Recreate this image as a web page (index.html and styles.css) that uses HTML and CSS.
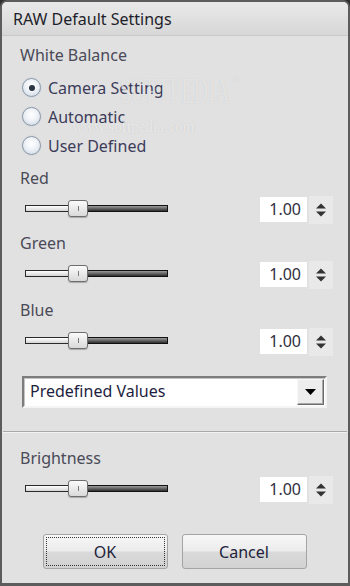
FILE: index.html
```html
<!DOCTYPE html>
<html>
<head>
<meta charset="utf-8">
<link rel="stylesheet" href="styles.css">
</head>
<body>
<div class="window">
  <div class="titlebar">RAW Default Settings</div>
  <div class="content">
    <div class="label">White Balance</div>
    <div class="radios">
      <div class="radio-row"><span class="radio checked"></span><span class="radio-text">Camera Setting</span></div>
      <div class="radio-row"><span class="radio"></span><span class="radio-text">Automatic</span></div>
      <div class="radio-row"><span class="radio"></span><span class="radio-text">User Defined</span></div>
    </div>

    <div class="param top">
      <div class="label">Red</div>
      <div class="slider-row">
        <div class="slider"><div class="track-left"></div><div class="thumb"></div><div class="track-right"></div></div>
        <div class="spin"><div class="spin-value">1.00</div><div class="spin-arrows"><svg width="12" height="14" viewBox="0 0 12 14"><path d="M6 0.5 L11 5.5 H1 Z" fill="#333"/><path d="M1 8.5 H11 L6 13.5 Z" fill="#333"/></svg></div></div>
      </div>
    </div>
    <div class="param">
      <div class="label">Green</div>
      <div class="slider-row">
        <div class="slider"><div class="track-left"></div><div class="thumb"></div><div class="track-right"></div></div>
        <div class="spin"><div class="spin-value">1.00</div><div class="spin-arrows"><svg width="12" height="14" viewBox="0 0 12 14"><path d="M6 0.5 L11 5.5 H1 Z" fill="#333"/><path d="M1 8.5 H11 L6 13.5 Z" fill="#333"/></svg></div></div>
      </div>
    </div>
    <div class="param wide">
      <div class="label">Blue</div>
      <div class="slider-row">
        <div class="slider"><div class="track-left"></div><div class="thumb"></div><div class="track-right"></div></div>
        <div class="spin"><div class="spin-value">1.00</div><div class="spin-arrows"><svg width="12" height="14" viewBox="0 0 12 14"><path d="M6 0.5 L11 5.5 H1 Z" fill="#333"/><path d="M1 8.5 H11 L6 13.5 Z" fill="#333"/></svg></div></div>
      </div>
    </div>

    <div class="dropdown">
      <div class="dropdown-text">Predefined Values</div>
      <div class="dropdown-btn"><svg width="11" height="6" viewBox="0 0 11 6"><path d="M0 0 H11 L5.5 6 Z" fill="#000"/></svg></div>
    </div>
  </div>

  <div class="separator"></div>

  <div class="content lower">
    <div class="param first">
      <div class="label">Brightness</div>
      <div class="slider-row">
        <div class="slider"><div class="track-left"></div><div class="thumb"></div><div class="track-right"></div></div>
        <div class="spin"><div class="spin-value">1.00</div><div class="spin-arrows"><svg width="12" height="14" viewBox="0 0 12 14"><path d="M6 0.5 L11 5.5 H1 Z" fill="#333"/><path d="M1 8.5 H11 L6 13.5 Z" fill="#333"/></svg></div></div>
      </div>
    </div>
  </div>

  <div class="buttons">
    <div class="button"><span class="focus-ring">OK</span></div>
    <div class="button"><span class="focus-ring plain">Cancel</span></div>
  </div>

  <div class="watermark">SOFTPEDIA<span class="tm">™</span></div>
  <div class="watermark-url">www.softpedia.com</div>
</div>
</body>
</html>
```

FILE: styles.css
```css
html, body {
  margin: 0;
  padding: 0;
  background: #2e2e2e;
}

.window {
  position: relative;
  box-sizing: border-box;
  width: 350px;
  height: 586px;
  border: 2px solid #5c5c5c;
  border-bottom-width: 3px;
  border-radius: 7px 7px 0 0;
  background: #e1e1e1;
  font-family: "Noto Sans", "Open Sans", sans-serif;
  font-size: 16px;
  color: #4a4a58;
  overflow: hidden;
}

.titlebar {
  height: 33px;
  line-height: 34px;
  padding-left: 11px;
  color: #1e1e2a;
  background: linear-gradient(#e9e9e9, #d7d7d7);
  border-bottom: 1px solid #c9c9c9;
}

.content {
  display: flex;
  flex-direction: column;
  padding: 9px 15px 0 18px;
}

.label {
  height: 20px;
  line-height: 20px;
}

.radios {
  display: flex;
  flex-direction: column;
  margin-top: 8px;
}

.radio-row {
  height: 29px;
  display: flex;
  align-items: center;
}

.radio {
  box-sizing: border-box;
  width: 19px;
  height: 19px;
  margin-left: 2px;
  border-radius: 50%;
  border: 1px solid #8d98a4;
  background: radial-gradient(circle at 50% 40%, #ffffff 0%, #eef2f7 45%, #c6d2df 100%);
  box-shadow: 0 0 0 1px #d6dbe1;
  display: flex;
  align-items: center;
  justify-content: center;
}

.radio.checked::after {
  content: "";
  width: 6px;
  height: 6px;
  border-radius: 50%;
  background: #2b3440;
}

.radio-text {
  margin-left: 7px;
  color: #3c3c5a;
}

.param {
  display: flex;
  flex-direction: column;
  margin-top: 11px;
}

.param.top {
  margin-top: 8px;
}

.param.wide {
  margin-top: 13px;
}

.param.first {
  margin-top: 0;
}

.slider-row {
  display: flex;
  align-items: center;
  margin-top: 9px;
  height: 25px;
}

.slider {
  display: flex;
  align-items: center;
  width: 143px;
  margin-left: 5px;
  margin-top: -3px;
}

.track-left {
  box-sizing: border-box;
  width: 44px;
  height: 7px;
  border: 1px solid #2a2a2a;
  border-right: none;
  background: linear-gradient(#ffffff, #d4d4d4);
}

.track-right {
  box-sizing: border-box;
  flex: 1;
  height: 7px;
  border: 1px solid #111;
  border-left: none;
  background: linear-gradient(#9c9c9c, #2e2e2e);
}

.thumb {
  box-sizing: border-box;
  width: 20px;
  height: 17px;
  margin-left: -1px;
  margin-right: -1px;
  border: 1px solid #6e6e6e;
  border-radius: 3px;
  background: linear-gradient(#fbfbfb, #d9d9d9);
  box-shadow: 0 1px 1px rgba(0,0,0,0.25);
  display: flex;
  align-items: center;
  justify-content: center;
  position: relative;
  z-index: 1;
}

.thumb::after {
  content: "";
  width: 1px;
  height: 5px;
  background: #7a7a7a;
}

.spin {
  margin-left: auto;
  display: flex;
  align-items: center;
  gap: 2px;
}

.spin-value {
  width: 47px;
  height: 25px;
  box-sizing: border-box;
  background: #ffffff;
  text-align: right;
  padding-right: 6px;
  line-height: 25px;
  color: #303040;
}

.spin-arrows {
  width: 24px;
  height: 28px;
  background: #e9e9e9;
  display: flex;
  align-items: center;
  justify-content: center;
}

.dropdown {
  box-sizing: border-box;
  width: 305px;
  height: 32px;
  margin-top: 22px;
  margin-left: 2px;
  display: flex;
  align-items: stretch;
  background: #ffffff;
  border: 2px solid;
  border-color: #7d7d7d #f4f4f4 #f4f4f4 #7d7d7d;
  box-shadow: inset 1px 1px 0 #c4c4c4;
}

.dropdown-text {
  flex: 1;
  padding-left: 6px;
  line-height: 27px;
  color: #1e1e40;
}

.dropdown-btn {
  box-sizing: border-box;
  width: 27px;
  margin: 1px 1px 1px 0;
  background: #ededed;
  border: 1px solid;
  border-color: #f8f8f8 #6a6a6a #6a6a6a #f8f8f8;
  box-shadow: inset -1px -1px 0 #a8a8a8;
  display: flex;
  align-items: center;
  justify-content: center;
}

.separator {
  height: 1px;
  margin: 23px 1px 0 1px;
  background: #a9a9a9;
  border-bottom: 1px solid #f2f2f2;
}

.content.lower {
  padding-top: 15px;
}

.buttons {
  display: flex;
  justify-content: center;
  gap: 14px;
  margin-top: 32px;
  padding-right: 1px;
}

.button {
  box-sizing: border-box;
  width: 125px;
  height: 35px;
  border: 1px solid #a4a4a4;
  border-radius: 3px;
  background: linear-gradient(#f7f7f7 0%, #ececec 48%, #dadada 52%, #d2d2d2 100%);
  display: flex;
  padding: 2px;
}

.focus-ring {
  flex: 1;
  display: flex;
  align-items: center;
  justify-content: center;
  border: 1px dotted #333;
  color: #22223a;
}

.focus-ring.plain {
  border-color: transparent;
}

.watermark {
  position: absolute;
  left: 118px;
  top: 71px;
  font-family: "Liberation Serif", serif;
  font-size: 35px;
  line-height: 38px;
  white-space: nowrap;
  color: rgba(255, 255, 255, 0.55);
  text-shadow: 0 0 1px rgba(150, 150, 150, 0.4);
  transform: scaleX(0.58);
  transform-origin: left top;
  pointer-events: none;
}

.watermark .tm {
  font-size: 11px;
  vertical-align: top;
  line-height: 16px;
  margin-left: 6px;
}

.watermark-url {
  position: absolute;
  left: 70px;
  top: 115px;
  font-family: "Liberation Serif", serif;
  font-size: 17px;
  line-height: 20px;
  white-space: nowrap;
  color: rgba(255, 255, 255, 0.6);
  text-shadow: 0 0 1px rgba(150, 150, 150, 0.4);
  transform: scaleX(0.9);
  transform-origin: left top;
  pointer-events: none;
}
```
